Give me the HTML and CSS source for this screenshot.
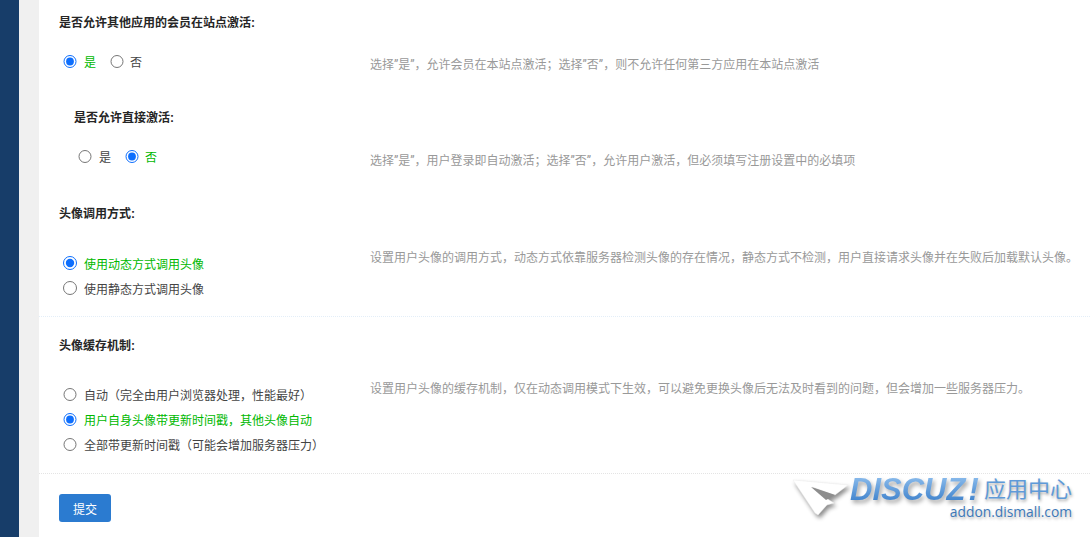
FILE: index.html
```html
<!DOCTYPE html>
<html lang="zh-CN">
<head>
    <meta charset="UTF-8">
    <title>应用设置</title>
    <link rel="stylesheet" href="styles.css">
</head>
<body>
    <div class="sidebar"></div>
    <div class="gutter"></div>
    <form class="main">
        <div class="section first">
            <div class="title">是否允许其他应用的会员在站点激活:</div>
            <div class="row">
                <div class="options inline">
                    <label class="on"><input type="radio" name="a" checked>是</label>
                    <label><input type="radio" name="a">否</label>
                </div>
                <div class="tip">选择”是”，允许会员在本站点激活；选择”否”，则不允许任何第三方应用在本站点激活</div>
            </div>
        </div>

        <div class="section indent">
            <div class="title">是否允许直接激活:</div>
            <div class="row">
                <div class="options inline">
                    <label><input type="radio" name="b">是</label>
                    <label class="on"><input type="radio" name="b" checked>否</label>
                </div>
                <div class="tip">选择”是”，用户登录即自动激活；选择”否”，允许用户激活，但必须填写注册设置中的必填项</div>
            </div>
        </div>

        <div class="section stacked third">
            <div class="title">头像调用方式:</div>
            <div class="row">
                <div class="options">
                    <label class="on"><input type="radio" name="c" checked>使用动态方式调用头像</label>
                    <label><input type="radio" name="c">使用静态方式调用头像</label>
                </div>
                <div class="tip">设置用户头像的调用方式，动态方式依靠服务器检测头像的存在情况，静态方式不检测，用户直接请求头像并在失败后加载默认头像。</div>
            </div>
        </div>

        <div class="section stacked fourth">
            <div class="title">头像缓存机制:</div>
            <div class="row">
                <div class="options">
                    <label><input type="radio" name="d">自动（完全由用户浏览器处理，性能最好）</label>
                    <label class="on"><input type="radio" name="d" checked>用户自身头像带更新时间戳，其他头像自动</label>
                    <label><input type="radio" name="d">全部带更新时间戳（可能会增加服务器压力）</label>
                </div>
                <div class="tip">设置用户头像的缓存机制，仅在动态调用模式下生效，可以避免更换头像后无法及时看到的问题，但会增加一些服务器压力。</div>
            </div>
        </div>

        <div class="actions">
            <button type="button" class="submit">提交</button>
        </div>
    </form>

    <!-- watermark -->
    <div class="watermark">
        <svg class="plane" width="56" height="44" viewBox="0 0 56 44">
            <polygon points="0,5 55,10 42,20 19,12 33,23 41,28 34,30 25,40 22,38" fill="#fff" stroke="#ececec" stroke-width="0.5"/>
            <polygon points="18,12 42,20 33,25" fill="#8d8d8d"/>
        </svg>
        <div class="brand">
            <div class="brand-top">
                <span class="discuz">DISCUZ</span>
                <span class="discuz bang">!</span>
                <span class="center">应用中心</span>
            </div>
            <div class="domain">addon.dismall.com</div>
        </div>
    </div>
</body>
</html>
```

FILE: styles.css
```css
* {
    box-sizing: border-box;
}

html, body {
    height: 100%;
}

body {
    margin: 0;
    display: flex;
    overflow: hidden;
    background: #fff;
    color: #333;
    font-family: "Liberation Sans", "Noto Sans CJK SC", sans-serif;
    font-size: 12px;
}

.sidebar {
    width: 19px;
    flex-shrink: 0;
    background: #173d69;
}

.gutter {
    width: 20px;
    flex-shrink: 0;
    background: #f0f0f0;
}

.main {
    flex: 1;
    min-width: 0;
}

/* Setting blocks */
.section {
    padding-left: 20px;
}

.section.first {
    padding-top: 12px;
    height: 95px;
}

.section.indent {
    padding-left: 35px;
    height: 96px;
}

.section.third {
    height: 126px;
    border-bottom: 1px dotted #e3eef8;
}

.section.fourth {
    padding-top: 18px;
    height: 157px;
    border-bottom: 1px dotted #e4e4e4;
}

.section.indent,
.section.third {
    padding-top: 12px;
}

.title {
    height: 20px;
    line-height: 22px;
    font-weight: bold;
    color: #262626;
}

.row {
    display: flex;
    margin-top: 17px;
}

.stacked .row {
    margin-top: 24px;
}

.fourth.stacked .row {
    margin-top: 23px;
}

.options {
    width: 311px;
    flex-shrink: 0;
    color: #444;
}

.indent .options {
    width: 296px;
}

.stacked .options {
    padding-top: 4px;
}

.third .options {
    padding-top: 3.5px;
}

.options label {
    display: flex;
    align-items: center;
    height: 25px;
    padding-left: 4px;
}

.options.inline {
    display: flex;
}

.options.inline label {
    margin-right: 10px;
}

.options.inline label + label input {
    margin-right: 6.5px;
}

.options input {
    width: 13.5px;
    height: 13.5px;
    margin: 0 7.5px 0 0;
    accent-color: #0d6efd;
}

.options .on {
    color: #00b800;
}

.tip {
    font-family: Roboto, "Noto Sans CJK SC", sans-serif;
    line-height: 22px;
    color: #999;
    white-space: nowrap;
    padding-top: 5px;
}

.indent .tip {
    padding-top: 6px;
}

.stacked .tip {
    padding-top: 0;
}

.actions {
    padding: 20px 0 0 20px;
}

.submit {
    width: 52px;
    height: 28px;
    padding: 0;
    border: none;
    border-radius: 3px;
    background: #2b7bd0;
    color: #fff;
    font-family: inherit;
    font-size: 12px;
}

/* Watermark over the bottom right corner */
.watermark {
    position: absolute;
    top: 475px;
    left: 793px;
    width: 285px;
    display: flex;
}

.plane {
    flex-shrink: 0;
    filter: drop-shadow(2px 3px 2px rgba(0, 0, 0, 0.45));
}

.brand {
    margin-left: 1px;
    width: 222px;
}

.brand-top {
    display: flex;
    align-items: center;
    height: 24px;
    margin-top: 3px;
}

.discuz {
    padding-right: 3px;
    line-height: 24px;
    font-size: 31px;
    font-weight: bold;
    font-style: italic;
    background: linear-gradient(to bottom, #86b8ea, #3f82cc);
    -webkit-background-clip: text;
    background-clip: text;
    color: transparent;
    filter: drop-shadow(2px 3px 2px rgba(0, 0, 0, 0.35));
}

.center {
    margin-left: auto;
    line-height: 24px;
    font-size: 22px;
    color: #5f9ad8;
    text-shadow: 1px 2px 3px rgba(0, 0, 0, 0.35);
}

.domain {
    text-align: right;
    font-family: "Open Sans", sans-serif;
    font-size: 13.8px;
    line-height: 19px;
    color: #3c78b8;
    text-shadow: 1px 2px 3px rgba(0, 0, 0, 0.3);
}
```
